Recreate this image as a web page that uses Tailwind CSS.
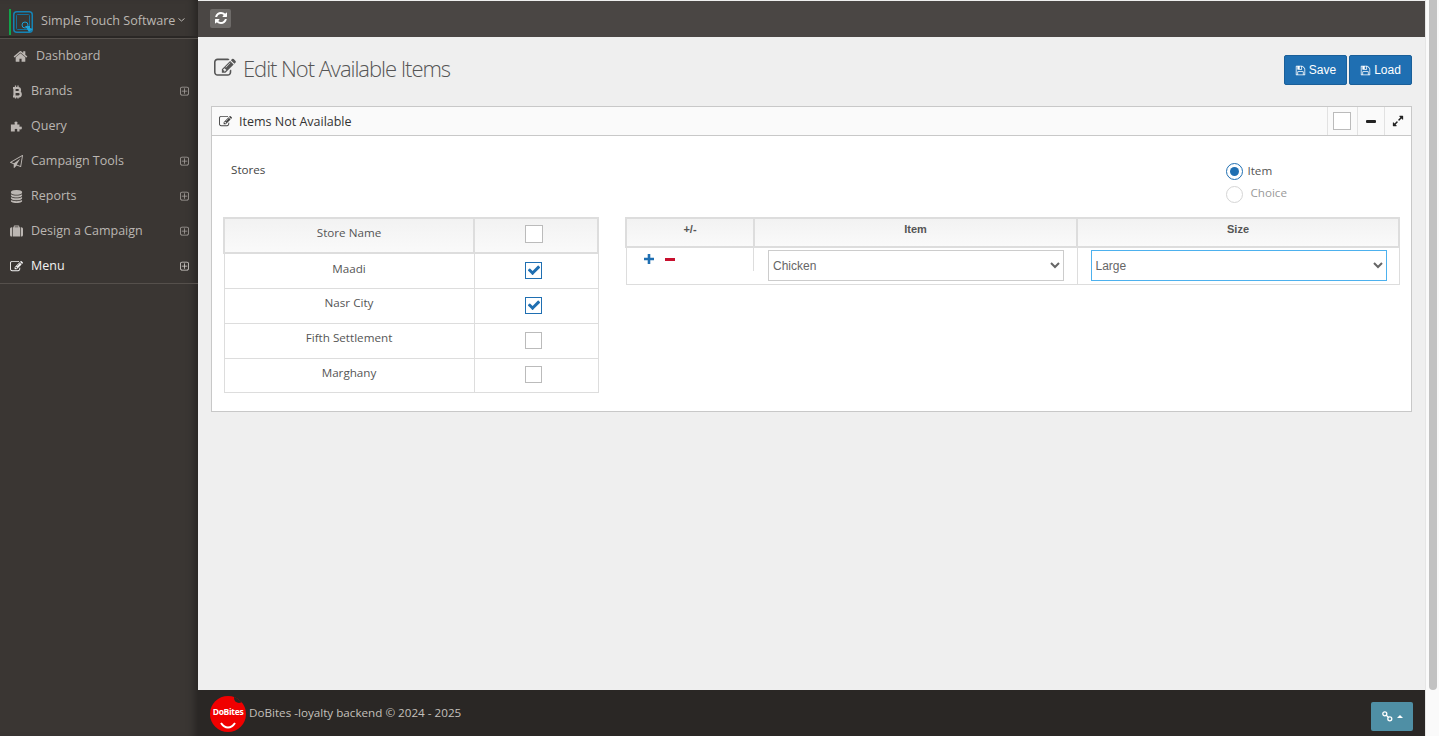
<!DOCTYPE html>
<html lang="en">
<head>
    <meta charset="UTF-8">
    <meta name="viewport" content="width=device-width, initial-scale=1.0">
    <title>Edit Not Available Items</title>
    <script src="https://cdn.jsdelivr.net/npm/@tailwindcss/browser@4"></script>
</head>
<body class="flex h-screen overflow-hidden bg-[#efefef] font-['Open_Sans',sans-serif] text-[11.67px] text-[#444]">
    <div class="flex min-w-0 flex-1">
        <!-- Sidebar -->
        <aside class="flex w-[198px] shrink-0 flex-col bg-[#3a3633] pt-px shadow-[inset_-9px_0_8px_-6px_rgba(0,0,0,0.35)]">
            <div class="flex h-[37px] items-center border-b-2 border-b-[#2a2725] pl-[9px] pt-[6px] shadow-[0_1px_0_#55504c]">
                <span class="h-[26px] w-[2px] bg-[#12a34a]"></span>
                <svg class="ml-[2px] h-[22px] w-[20px]" viewBox="0 0 20 22" fill="none">
                    <rect x=".75" y=".75" width="18.500" height="20.500" rx="3" stroke="#1583b5" stroke-width="1.500"/>
                    <rect x="3.500" y="3.500" width="13" height="15" rx="1" stroke="#14709c" stroke-width="1"/>
                    <circle cx="12" cy="14" r="3" stroke="#1ba0d8" stroke-width="1"/>
                    <path d="M12 15l4 6 4-3-3-1v-2z" fill="#1ba0d8"/>
                </svg>
                <span class="ml-[8px] text-[12.600px] text-[#bbb6b2]">Simple Touch Software</span>
                <svg class="ml-[3px] mb-[3px] h-[4px] w-[7px]" viewBox="0 0 7 4" fill="none"><path d="M.5.5l3 2.500 3-2.500" stroke="#bbb6b2"/></svg>
            </div>
            <nav class="border-b border-b-[#55504c] text-[12.500px] text-[#bbb6b2]">
                <a class="flex h-[35px] items-center pl-[13px] pt-[2px]">
                    <svg class="h-[15px] w-[15px] fill-[#bbb6b2]" viewBox="0 0 1792 1792"><path d="M1472 992v480q0 26-19 45t-45 19h-384v-384h-256v384h-384q-26 0-45-19t-19-45v-480q0-1 .5-3t.5-3l575-474 575 474q1 2 1 6zm223-69l-62 74q-8 9-21 11h-3q-13 0-21-7l-692-577-692 577q-12 8-24 7-13-2-21-11l-62-74q-8-10-7-23.500t11-21.500l719-599q32-26 76-26t76 26l244 204v-195q0-14 9-23t23-9h192q14 0 23 9t9 23v408l219 182q10 8 11 21.500t-7 23.500z"/></svg>
                    <span class="ml-[8px]">Dashboard</span>
                </a>
                <a class="flex h-[35px] items-center pl-[10px] pr-[8px] pt-[2px]">
                    <svg class="h-[14px] w-[13px]" viewBox="0 0 13 14" fill="none" stroke="#bbb6b2"><path d="M4.500 3v8.500M3 3h5a2 2 0 0 1 0 4H4.500M4.500 7h4a2.200 2.200 0 0 1 0 4.500H3" stroke-width="2.200"/><path d="M5.500 .5v2.500M8 .5v2.500M5.500 11v2.500M8 11v2.500" stroke-width="1.300"/></svg>
                    <span class="ml-[8px] flex-1">Brands</span>
                    <svg class="h-[11px] w-[11px] fill-[#a8a39f]" viewBox="0 0 1792 1792"><path d="M1344 800v64q0 14-9 23t-23 9h-352v352q0 14-9 23t-23 9h-64q-14 0-23-9t-9-23v-352h-352q-14 0-23-9t-9-23v-64q0-14 9-23t23-9h352v-352q0-14 9-23t23-9h64q14 0 23 9t9 23v352h352q14 0 23 9t9 23zm128 448v-832q0-66-47-113t-113-47h-832q-66 0-113 47t-47 113v832q0 66 47 113t113 47h832q66 0 113-47t47-113zm128-832v832q0 119-84.500 203.500t-203.500 84.500h-832q-119 0-203.500-84.500t-84.500-203.500v-832q0-119 84.500-203.500t203.500-84.500h832q119 0 203.500 84.500t84.500 203.500z"/></svg>
                </a>
                <a class="flex h-[35px] items-center pl-[10px] pr-[8px] pt-[2px]">
                    <svg class="h-[13px] w-[13px] fill-[#bbb6b2]" viewBox="0 0 13 13"><path d="M3.500 4.500h1.200V3.400a1.400 1.400 0 1 1 2.600 0v1.100h2.200v2.300h.6a1.300 1.300 0 1 1 0 2.400h-.6v2.300H7.200v-1a1.300 1.300 0 1 0-2.400 0v1H.9V4.500z"/></svg>
                    <span class="ml-[8px] flex-1">Query</span>
                </a>
                <a class="flex h-[35px] items-center pl-[10px] pr-[8px] pt-[2px]">
                    <svg class="h-[13px] w-[13px] fill-[#bbb6b2]" viewBox="0 0 1792 1792"><path d="M1764 11q33 24 27 64l-256 1536q-5 29-32 45-14 8-31 8-11 0-24-5l-527-215-298 327q-18 21-47 21-14 0-23-4-19-7-30-23.500t-11-36.500v-452l-472-193q-37-14-40-55-3-39 32-59l1664-960q35-21 68 2zm-342 1499l221-1323-1434 827 336 137 863-639-478 797z"/></svg>
                    <span class="ml-[8px] flex-1">Campaign Tools</span>
                    <svg class="h-[11px] w-[11px] fill-[#a8a39f]" viewBox="0 0 1792 1792"><path d="M1344 800v64q0 14-9 23t-23 9h-352v352q0 14-9 23t-23 9h-64q-14 0-23-9t-9-23v-352h-352q-14 0-23-9t-9-23v-64q0-14 9-23t23-9h352v-352q0-14 9-23t23-9h64q14 0 23 9t9 23v352h352q14 0 23 9t9 23zm128 448v-832q0-66-47-113t-113-47h-832q-66 0-113 47t-47 113v832q0 66 47 113t113 47h832q66 0 113-47t47-113zm128-832v832q0 119-84.500 203.500t-203.500 84.500h-832q-119 0-203.500-84.500t-84.500-203.500v-832q0-119 84.500-203.500t203.500-84.500h832q119 0 203.500 84.500t84.500 203.500z"/></svg>
                </a>
                <a class="flex h-[35px] items-center pl-[10px] pr-[8px] pt-[2px]">
                    <svg class="h-[13px] w-[13px] fill-[#bbb6b2]" viewBox="0 0 1792 1792"><path d="M896 768q237 0 443-43t325-127v170q0 69-103 128t-280 93.500-385 34.500-385-34.500-280-93.500-103-128v-170q119 84 325 127t443 43zm0 768q237 0 443-43t325-127v170q0 69-103 128t-280 93.500-385 34.500-385-34.500-280-93.500-103-128v-170q119 84 325 127t443 43zm0-384q237 0 443-43t325-127v170q0 69-103 128t-280 93.500-385 34.500-385-34.500-280-93.500-103-128v-170q119 84 325 127t443 43zm0-1152q208 0 385 34.500t280 93.500 103 128v128q0 69-103 128t-280 93.500-385 34.500-385-34.500-280-93.500-103-128v-128q0-69 103-128t280-93.500 385-34.500z"/></svg>
                    <span class="ml-[8px] flex-1">Reports</span>
                    <svg class="h-[11px] w-[11px] fill-[#a8a39f]" viewBox="0 0 1792 1792"><path d="M1344 800v64q0 14-9 23t-23 9h-352v352q0 14-9 23t-23 9h-64q-14 0-23-9t-9-23v-352h-352q-14 0-23-9t-9-23v-64q0-14 9-23t23-9h352v-352q0-14 9-23t23-9h64q14 0 23 9t9 23v352h352q14 0 23 9t9 23zm128 448v-832q0-66-47-113t-113-47h-832q-66 0-113 47t-47 113v832q0 66 47 113t113 47h832q66 0 113-47t47-113zm128-832v832q0 119-84.500 203.500t-203.500 84.500h-832q-119 0-203.500-84.500t-84.500-203.500v-832q0-119 84.500-203.500t203.500-84.500h832q119 0 203.500 84.500t84.500 203.500z"/></svg>
                </a>
                <a class="flex h-[35px] items-center pl-[10px] pr-[8px] pt-[2px]">
                    <svg class="h-[13px] w-[13px] fill-[#bbb6b2]" viewBox="0 0 1792 1792"><path d="M640 320h512v-128h-512v128zm-352 0v1280h-64q-92 0-158-66t-66-158v-832q0-92 66-158t158-66h64zm1120 0v1280h-1024v-1280h128v-160q0-40 28-68t68-28h576q40 0 68 28t28 68v160h128zm384 224v832q0 92-66 158t-158 66h-64v-1280h64q92 0 158 66t66 158z"/></svg>
                    <span class="ml-[8px] flex-1">Design a Campaign</span>
                    <svg class="h-[11px] w-[11px] fill-[#a8a39f]" viewBox="0 0 1792 1792"><path d="M1344 800v64q0 14-9 23t-23 9h-352v352q0 14-9 23t-23 9h-64q-14 0-23-9t-9-23v-352h-352q-14 0-23-9t-9-23v-64q0-14 9-23t23-9h352v-352q0-14 9-23t23-9h64q14 0 23 9t9 23v352h352q14 0 23 9t9 23zm128 448v-832q0-66-47-113t-113-47h-832q-66 0-113 47t-47 113v832q0 66 47 113t113 47h832q66 0 113-47t47-113zm128-832v832q0 119-84.500 203.500t-203.500 84.500h-832q-119 0-203.500-84.500t-84.500-203.500v-832q0-119 84.500-203.500t203.500-84.500h832q119 0 203.500 84.500t84.500 203.500z"/></svg>
                </a>
                <a class="flex h-[35px] items-center pl-[10px] pr-[8px] pt-[2px] text-[#f2f2f2]">
                    <svg class="h-[13px] w-[13px] fill-[#f2f2f2]" viewBox="0 0 1792 1792"><path d="M888 1184l116-116-152-152-116 116v56h96v96h56zm440-720q-16-16-33 1l-350 350q-17 17-1 33t33-1l350-350q17-17 1-33zm80 594v190q0 119-84.500 203.500t-203.500 84.500h-832q-119 0-203.500-84.500t-84.500-203.500v-832q0-119 84.500-203.500t203.500-84.500h832q63 0 117 25 15 7 18 23 3 17-9 29l-49 49q-14 14-32 8-23-6-45-6h-832q-66 0-113 47t-47 113v832q0 66 47 113t113 47h832q66 0 113-47t47-113v-126q0-13 9-22l64-64q15-15 35-7t20 29zm-96-738l288 288-672 672h-288v-288zm444 132l-92 92-288-288 92-92q28-28 68-28t68 28l152 152q28 28 28 68t-28 68z"/></svg>
                    <span class="ml-[8px] flex-1">Menu</span>
                    <svg class="h-[11px] w-[11px] fill-[#d8d4d0]" viewBox="0 0 1792 1792"><path d="M1344 800v64q0 14-9 23t-23 9h-352v352q0 14-9 23t-23 9h-64q-14 0-23-9t-9-23v-352h-352q-14 0-23-9t-9-23v-64q0-14 9-23t23-9h352v-352q0-14 9-23t23-9h64q14 0 23 9t9 23v352h352q14 0 23 9t9 23zm128 448v-832q0-66-47-113t-113-47h-832q-66 0-113 47t-47 113v832q0 66 47 113t113 47h832q66 0 113-47t47-113zm128-832v832q0 119-84.500 203.500t-203.500 84.500h-832q-119 0-203.500-84.500t-84.500-203.500v-832q0-119 84.500-203.500t203.500-84.500h832q119 0 203.500 84.500t84.500 203.500z"/></svg>
                </a>
            </nav>
        </aside>

        <div class="flex min-w-0 flex-1 flex-col">
            <!-- Top bar -->
            <header class="mt-px flex h-[36px] shrink-0 items-center bg-[#4a4644] pb-[2px] pl-[12px]">
                <button class="flex h-[19px] w-[21px] items-center justify-center rounded-[2px] bg-[#6e6b69]">
                    <svg class="h-[14px] w-[14px] fill-white" viewBox="0 0 1792 1792"><path d="M1639 1056q0 5-1 7-64 268-268 434.500t-478 166.500q-146 0-282.500-55t-243.500-157l-129 129q-19 19-45 19t-45-19-19-45v-448q0-26 19-45t45-19h448q26 0 45 19t19 45-19 45l-137 137q71 66 161 102t187 36q134 0 250-65t186-179q11-17 53-117 8-23 30-23h192q13 0 22.500 9.500t9.500 22.500zm25-800v448q0 26-19 45t-45 19h-448q-26 0-45-19t-19-45 19-45l138-138q-148-137-349-137-134 0-250 65t-186 179q-11 17-53 117-8 23-30 23h-199q-13 0-22.500-9.500t-9.500-22.500v-7q65-268 270-434.500t480-166.500q146 0 284 55.500t245 156.500l130-129q19-19 45-19t45 19 19 45z"/></svg>
                </button>
            </header>

            <!-- Content -->
            <main class="flex-1 px-[13px]">
                <div class="flex h-[69px] items-center justify-between pb-[5px]">
                    <div class="mb-[2px] ml-[3px] flex items-center">
                        <svg class="h-[22px] w-[22px] fill-[#555]" viewBox="0 0 1792 1792"><path d="M888 1184l116-116-152-152-116 116v56h96v96h56zm440-720q-16-16-33 1l-350 350q-17 17-1 33t33-1l350-350q17-17 1-33zm80 594v190q0 119-84.500 203.500t-203.500 84.500h-832q-119 0-203.500-84.500t-84.500-203.500v-832q0-119 84.500-203.500t203.500-84.500h832q63 0 117 25 15 7 18 23 3 17-9 29l-49 49q-14 14-32 8-23-6-45-6h-832q-66 0-113 47t-47 113v832q0 66 47 113t113 47h832q66 0 113-47t47-113v-126q0-13 9-22l64-64q15-15 35-7t20 29zm-96-738l288 288-672 672h-288v-288zm444 132l-92 92-288-288 92-92q28-28 68-28t68 28l152 152q28 28 28 68t-28 68z"/></svg>
                        <h1 class="ml-[7px] text-[22px] leading-none font-light tracking-[-1.050px] text-[#555]">Edit Not Available Items</h1>
                    </div>
                    <div class="mt-[2px] flex gap-[2px] font-['Liberation_Sans',sans-serif] text-[12px] text-white">
                        <button class="flex h-[30px] w-[63px] items-center justify-center gap-[3px] rounded-[2px] border border-[#1a5f99] bg-[#1f6fb2]">
                            <svg class="h-[11px] w-[11px] fill-white" viewBox="0 0 1792 1792"><path d="M512 1536h768v-384h-768v384zm896 0h128v-896q0-14-10-38.500t-20-34.500l-281-281q-10-10-34-20t-39-10v416q0 40-28 68t-68 28h-576q-40 0-68-28t-28-68v-416h-128v1280h128v-416q0-40 28-68t68-28h832q40 0 68 28t28 68v416zm-384-928v-320q0-13-9.500-22.500t-22.500-9.500h-192q-13 0-22.500 9.500t-9.500 22.500v320q0 13 9.500 22.500t22.500 9.500h192q13 0 22.500-9.500t9.500-22.500zm640 32v928q0 40-28 68t-68 28h-1344q-40 0-68-28t-28-68v-1344q0-40 28-68t68-28h928q40 0 88 20t76 48l280 280q28 28 48 76t20 88z"/></svg>
                            Save
                        </button>
                        <button class="flex h-[30px] w-[63px] items-center justify-center gap-[3px] rounded-[2px] border border-[#1a5f99] bg-[#1f6fb2]">
                            <svg class="h-[11px] w-[11px] fill-white" viewBox="0 0 1792 1792"><path d="M512 1536h768v-384h-768v384zm896 0h128v-896q0-14-10-38.500t-20-34.500l-281-281q-10-10-34-20t-39-10v416q0 40-28 68t-68 28h-576q-40 0-68-28t-28-68v-416h-128v1280h128v-416q0-40 28-68t68-28h832q40 0 68 28t28 68v416zm-384-928v-320q0-13-9.500-22.500t-22.500-9.500h-192q-13 0-22.500 9.500t-9.500 22.500v320q0 13 9.500 22.500t22.500 9.500h192q13 0 22.500-9.500t9.500-22.500zm640 32v928q0 40-28 68t-68 28h-1344q-40 0-68-28t-28-68v-1344q0-40 28-68t68-28h928q40 0 88 20t76 48l280 280q28 28 48 76t20 88z"/></svg>
                            Load
                        </button>
                    </div>
                </div>

                <!-- Panel -->
                <section class="h-[306px] border border-[#c8c8c8] bg-white">
                    <div class="flex h-[29px] items-center border-b border-b-[#c8c8c8] bg-[#fafafa] pl-[7px]">
                        <svg class="h-[13px] w-[13px] fill-[#444]" viewBox="0 0 1792 1792"><path d="M888 1184l116-116-152-152-116 116v56h96v96h56zm440-720q-16-16-33 1l-350 350q-17 17-1 33t33-1l350-350q17-17 1-33zm80 594v190q0 119-84.500 203.500t-203.500 84.500h-832q-119 0-203.500-84.500t-84.500-203.500v-832q0-119 84.500-203.500t203.500-84.500h832q63 0 117 25 15 7 18 23 3 17-9 29l-49 49q-14 14-32 8-23-6-45-6h-832q-66 0-113 47t-47 113v832q0 66 47 113t113 47h832q66 0 113-47t47-113v-126q0-13 9-22l64-64q15-15 35-7t20 29zm-96-738l288 288-672 672h-288v-288zm444 132l-92 92-288-288 92-92q28-28 68-28t68 28l152 152q28 28 28 68t-28 68z"/></svg>
                        <span class="ml-[7px] mt-[3px] flex-1 text-[12.500px] text-[#333]">Items Not Available</span>
                        <div class="flex h-full w-[30px] items-center justify-center border-l border-l-[#e2e2e2] pr-[2px]"><span class="h-[18px] w-[18px] border border-[#bbb] bg-white"></span></div>
                        <div class="flex h-full w-[27px] items-center justify-center border-l border-l-[#e2e2e2]"><span class="h-[3px] w-[10px] rounded-[1px] bg-[#222]"></span></div>
                        <div class="flex h-full w-[27px] items-center justify-center border-l border-l-[#e2e2e2]">
                            <svg class="h-[12px] w-[12px] fill-[#222]" viewBox="0 0 1792 1792"><path d="M883 1056q0 13-10 23l-332 332 144 144q19 19 19 45t-19 45-45 19h-448q-26 0-45-19t-19-45v-448q0-26 19-45t45-19 45 19l144 144 332-332q10-10 23-10t23 10l114 114q10 10 10 23zm781-864v448q0 26-19 45t-45 19-45-19l-144-144-332 332q-10 10-23 10t-23-10l-114-114q-10-10-10-23t10-23l332-332-144-144q-19-19-19-45t19-45 45-19h448q26 0 45 19t19 45z"/></svg>
                        </div>
                    </div>

                    <div class="flex h-[81px] justify-between pl-[19px] pr-[124px]">
                        <label class="pt-[25px]">Stores</label>
                        <div class="pt-[27px]">
                            <label class="flex h-[17px] items-center gap-[4px]">
                                <span class="flex h-[17px] w-[17px] items-center justify-center rounded-full border-[1.500px] border-[#1f6fb2]"><span class="h-[9px] w-[9px] rounded-full bg-[#1f6fb2]"></span></span>
                                <span class="mb-[2px] text-[#555]">Item</span>
                            </label>
                            <label class="mt-[6px] flex h-[17px] items-center gap-[7px]">
                                <span class="h-[17px] w-[17px] rounded-full border border-[#d5d5d5]"></span>
                                <span class="mb-[3px] text-[#999]">Choice</span>
                            </label>
                        </div>
                    </div>

                    <div class="flex justify-between pl-[11px] pr-[11px]">
                        <!-- Stores table -->
                        <table class="w-[376px] table-fixed border-collapse self-start text-center text-[#555]">
                            <thead>
                                <tr class="h-[35px] bg-gradient-to-b from-[#f2f2f2] to-[#fafafa]">
                                    <th class="w-[250px] border-2 border-[#ddd] pb-[5px] font-normal">Store Name</th>
                                    <th class="border-2 border-[#ddd] pb-[4px] pr-[5px]"><span class="mx-auto block h-[18px] w-[18px] border border-[#bbb] bg-white"></span></th>
                                </tr>
                            </thead>
                            <tbody>
                                <tr class="h-[35px]">
                                    <td class="border border-[#ddd] pb-[5px]">Maadi</td>
                                    <td class="border border-[#ddd] pb-[1px] pr-[5px]">
                                        <span class="mx-auto flex h-[17px] w-[17px] items-center justify-center border border-[#1f6fb2]"><svg class="h-[14px] w-[14px] fill-[#1f6fb2]" viewBox="0 0 1792 1792"><path d="M1671 566q0 40-28 68l-724 724-136 136q-28 28-68 28t-68-28l-136-136-362-362q-28-28-28-68t28-68l136-136q28-28 68-28t68 28l294 295 656-657q28-28 68-28t68 28l136 136q28 28 28 68z"/></svg></span>
                                    </td>
                                </tr>
                                <tr class="h-[35px]">
                                    <td class="border border-[#ddd] pb-[5px]">Nasr City</td>
                                    <td class="border border-[#ddd] pb-[1px] pr-[5px]">
                                        <span class="mx-auto flex h-[17px] w-[17px] items-center justify-center border border-[#1f6fb2]"><svg class="h-[14px] w-[14px] fill-[#1f6fb2]" viewBox="0 0 1792 1792"><path d="M1671 566q0 40-28 68l-724 724-136 136q-28 28-68 28t-68-28l-136-136-362-362q-28-28-28-68t28-68l136-136q28-28 68-28t68 28l294 295 656-657q28-28 68-28t68 28l136 136q28 28 28 68z"/></svg></span>
                                    </td>
                                </tr>
                                <tr class="h-[35px]">
                                    <td class="border border-[#ddd] pb-[5px]">Fifth Settlement</td>
                                    <td class="border border-[#ddd] pb-[1px] pr-[5px]"><span class="mx-auto block h-[17px] w-[17px] border border-[#bbb]"></span></td>
                                </tr>
                                <tr class="h-[34px]">
                                    <td class="border border-[#ddd] pb-[5px]">Marghany</td>
                                    <td class="border border-[#ddd] pb-[1px] pr-[5px]"><span class="mx-auto block h-[17px] w-[17px] border border-[#bbb]"></span></td>
                                </tr>
                            </tbody>
                        </table>

                        <!-- Items table -->
                        <table class="w-[775px] table-fixed border-collapse self-start text-center text-[#555]">
                            <thead>
                                <tr class="h-[29px] bg-gradient-to-b from-[#f2f2f2] to-[#fafafa] text-[11px]">
                                    <th class="w-[128px] border-2 border-[#ddd] pb-[7px] font-['Liberation_Sans',sans-serif] font-bold">+/-</th>
                                    <th class="w-[323px] border-2 border-[#ddd] pb-[7px] font-['Liberation_Sans',sans-serif] font-bold">Item</th>
                                    <th class="border-2 border-[#ddd] pb-[7px] font-['Liberation_Sans',sans-serif] font-bold">Size</th>
                                </tr>
                            </thead>
                            <tbody>
                                <tr class="h-[37px]">
                                    <td class="border border-r-0 border-[#ddd] p-0 align-top">
                                        <div class="flex h-[23px] items-start gap-[11px] border-r border-r-[#ddd] pl-[17px] pt-[6px]">
                                            <svg class="h-[10px] w-[10px] fill-[#1f6fb2]" viewBox="0 0 10 10"><path d="M3.700 0h2.600v3.700H10v2.600H6.300V10H3.700V6.300H0V3.700h3.700z"/></svg>
                                            <span class="mt-[4px] h-[3px] w-[10px] bg-[#c8102e]"></span>
                                        </div>
                                    </td>
                                    <td class="border border-l-0 border-[#ddd] px-[13px] pl-[14px] pt-[2px] align-top">
                                        <select class="h-[31px] w-full border border-[#ccc] bg-white pl-0 font-['Liberation_Sans',sans-serif] text-[12px] text-[#666]"><option>Chicken</option></select>
                                    </td>
                                    <td class="border border-[#ddd] pl-[13px] pr-[12px] pt-[2px] align-top">
                                        <select class="h-[31px] w-full border border-[#4db1ee] bg-white pl-0 font-['Liberation_Sans',sans-serif] text-[12px] text-[#666]"><option>Large</option></select>
                                    </td>
                                </tr>
                            </tbody>
                        </table>
                    </div>
                </section>
            </main>

            <!-- Footer -->
            <footer class="flex h-[46px] shrink-0 items-center justify-between bg-[#2a2725] pl-[12px] pr-[12px] text-[#c4c0bc]">
                <div class="flex items-center">
                    <div class="relative mt-[1px] flex h-[36px] w-[36px] items-center justify-center overflow-hidden rounded-full bg-[#f00000]">
                        <span class="mb-[3px] text-[8.500px] font-bold tracking-[-0.3px] text-white">DoBites</span>
                        <svg class="absolute bottom-[3px] left-[9px] h-[7px] w-[18px]" viewBox="0 0 18 7" fill="none"><path d="M2 1c4 6 10 6 14 0" stroke="white" stroke-width="2"/></svg>
                        <span class="absolute right-[2px] top-[-3px] h-[10px] w-[10px] rounded-full bg-[#2a2725]"></span>
                    </div>
                    <span class="ml-[3px]">DoBites -loyalty backend © 2024 - 2025</span>
                </div>
                <button class="mt-[6px] flex h-[29px] w-[42px] items-center justify-center gap-[4px] rounded-[2px] bg-[#4f8fa5]">
                    <svg class="h-[11px] w-[11px]" viewBox="0 0 11 11" fill="none" stroke="white" stroke-width="1.300"><circle cx="2.800" cy="2.800" r="2"/><circle cx="7.800" cy="7.800" r="2"/><path d="M4 4l2.500 2.500"/></svg>
                    <svg class="h-[3px] w-[6px] fill-white" viewBox="0 0 6 3"><path d="M0 3l3-3 3 3z"/></svg>
                </button>
            </footer>
        </div>
    </div>

    <!-- Scrollbar -->
    <div class="flex w-[14px] shrink-0 justify-end border-l border-l-[#e6e6e6] bg-[#fafafa] pr-[2px]">
        <div class="h-[690px] w-[8px] rounded-b-[4px] bg-[#c2c2c2]"></div>
    </div>
</body>
</html>
